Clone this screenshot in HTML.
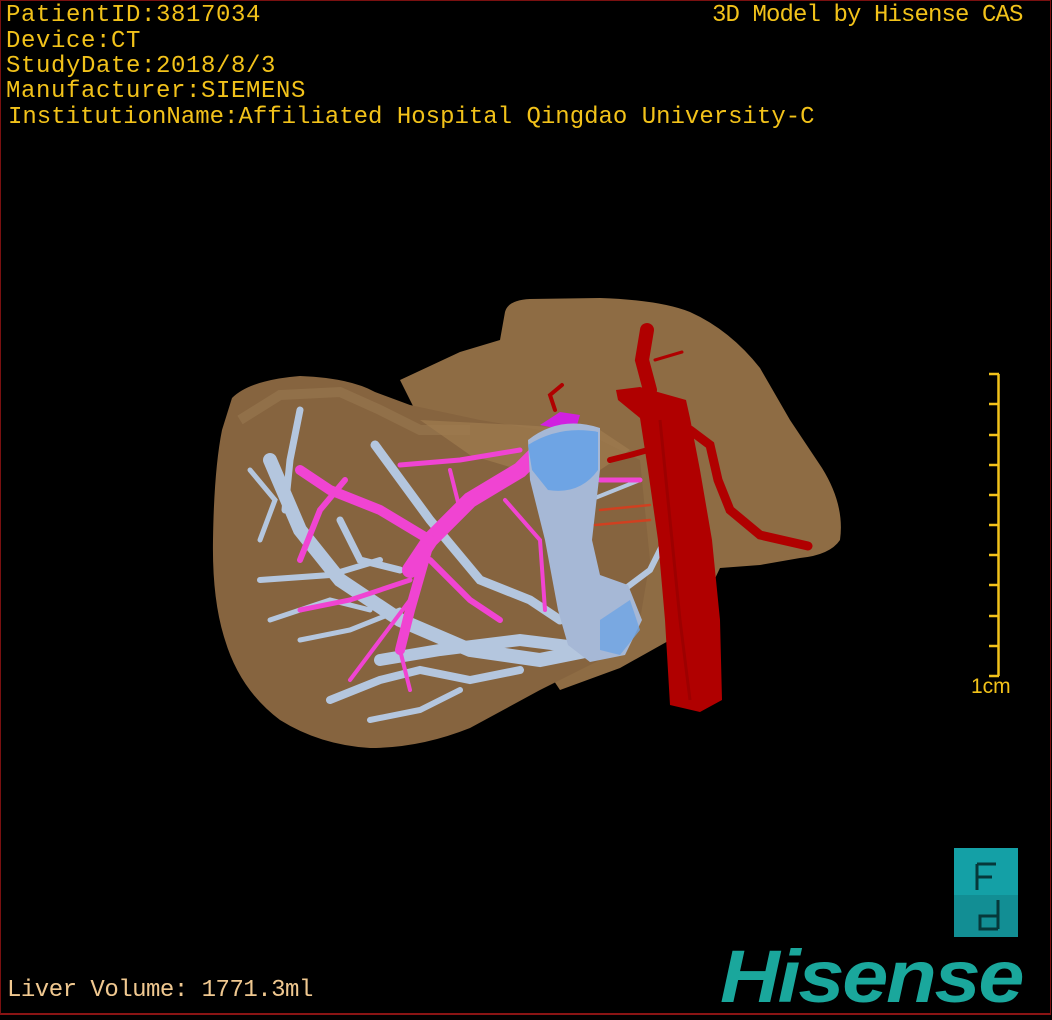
<!DOCTYPE html>
<html><head><meta charset="utf-8">
<style>
html,body{margin:0;padding:0;background:#000;}
#c{position:relative;width:1052px;height:1020px;background:#000;overflow:hidden;font-family:"Liberation Mono","Noto Sans CJK SC",monospace;}
.frame{position:absolute;left:0;top:0;width:1049px;height:1012px;border:1px solid #7a1010;border-bottom:2px solid #8a1414;}
.t{position:absolute;color:#f2c21a;font-size:24px;line-height:25px;white-space:pre;}
</style></head><body>
<div id="c">
<div class="frame"></div>
<div class="t" style="left:6px;top:3px;letter-spacing:0.6px">PatientID:3817034</div>
<div class="t" style="left:6px;top:29px;letter-spacing:0.6px">Device:CT</div>
<div class="t" style="left:6px;top:54px;letter-spacing:0.6px">StudyDate:2018/8/3</div>
<div class="t" style="left:6px;top:79px;letter-spacing:0.6px">Manufacturer:SIEMENS</div>
<div class="t" style="left:8px;top:105px;letter-spacing:0px">InstitutionName:Affiliated Hospital Qingdao University-C</div>
<div class="t" style="left:712px;top:3px;letter-spacing:-0.9px">3D Model by Hisense CAS</div>
<div class="t" style="left:7px;top:978px;letter-spacing:-0.5px;color:#f0c890">Liver Volume: 1771.3ml</div>
<div class="t" style="left:971px;top:674px;font-size:21px;font-family:'Liberation Sans',sans-serif">1cm</div>

<svg width="1052" height="1020" style="position:absolute;left:0;top:0">
<g stroke="#f2c21a" stroke-width="2.5" fill="none">
<path d="M998.5 374V676"/>
<path d="M989 374H999M989 404H999M989 435H999M989 465H999M989 495H999M989 525H999M989 555H999M989 585H999M989 616H999M989 646H999M989 676H999"/>
</g>
<path d="M505 312 Q508 300 530 299 L600 298 Q660 300 690 312 Q730 330 760 368 L790 420 L822 468 Q845 505 840 540 Q830 555 800 558 L760 565 L720 568 L700 610 L670 640 L620 668 L560 690 L500 600 L480 440 L420 420 L400 380 L460 352 L500 340 Z" fill="#8e6c44"/>
<path d="M232 398 Q250 380 300 376 Q350 378 375 392 L410 405 L480 420 L540 430 L600 440 L640 460 L650 560 L640 620 L600 660 L540 690 L470 728 Q420 748 370 748 Q320 745 280 720 Q240 690 225 640 Q212 600 213 540 Q214 470 222 430 Z" fill="#86643f"/>
<path d="M240 420 L280 395 L340 392 L380 410 L420 430 L470 430" stroke="#9a7850" stroke-width="10" fill="none" opacity="0.6"/>
<path d="M420 420 L520 425 L600 430 L630 450 L600 470 L520 470 L470 455 Z" fill="#a07c50" opacity="0.7"/>
<g stroke="#b4c6de" stroke-linecap="round" fill="none">
<path d="M270 460 L300 530 L340 580 L400 620 L470 650 L540 660 L590 650" stroke-width="14"/>
<path d="M380 660 L440 650 L520 640 L600 650" stroke-width="12"/>
<path d="M330 700 L380 680 L420 670 L470 680 L520 670" stroke-width="8"/>
<path d="M370 720 L420 710 L460 690" stroke-width="6"/>
<path d="M300 410 L290 460 L285 510" stroke-width="7"/>
<path d="M375 445 L430 520 L480 580 L530 600 L560 620" stroke-width="9"/>
<path d="M340 520 L360 560 L400 570" stroke-width="7"/>
<path d="M260 580 L330 575 L380 560" stroke-width="6"/>
<path d="M270 620 L330 600 L370 610" stroke-width="5"/>
<path d="M300 640 L350 630 L400 610" stroke-width="5"/>
<path d="M250 470 L275 500 L260 540" stroke-width="5"/>
<path d="M610 600 L650 570 L665 540" stroke-width="6"/>
<path d="M590 500 L640 480" stroke-width="4"/>
</g>
<g stroke="#f044d2" stroke-linecap="round" fill="none">
<path d="M560 430 L520 470 L470 500 L430 540 L410 570" stroke-width="16"/>
<path d="M430 540 L410 610 L400 650" stroke-width="10"/>
<path d="M430 540 L380 510 L330 490 L300 470" stroke-width="10"/>
<path d="M345 480 L320 510 L300 560" stroke-width="6"/>
<path d="M430 560 L470 600 L500 620" stroke-width="6"/>
<path d="M410 580 L350 600 L300 610" stroke-width="5"/>
<path d="M400 465 L460 460 L520 450" stroke-width="5"/>
<path d="M450 470 L460 510" stroke-width="4"/>
<path d="M505 500 L540 540 L545 610" stroke-width="4"/>
<path d="M400 650 L410 690" stroke-width="4"/>
<path d="M600 480 L640 480" stroke-width="5"/>
<path d="M410 600 L380 640 L350 680" stroke-width="4"/>
</g>
<path d="M540 425 L560 412 L580 415 L575 432 Z" fill="#d020e0"/>
<path d="M528 440 Q560 415 600 428 L600 470 L592 540 L600 575 L628 585 L642 620 L625 655 L590 662 L568 645 L558 610 L545 540 L530 480 Z" fill="#a6b8d6"/>
<path d="M528 445 Q560 425 598 432 L598 470 Q580 495 548 490 L532 470 Z" fill="#6ea4e4"/>
<path d="M600 620 L630 600 L640 630 L620 655 L600 650 Z" fill="#6ea4e4" opacity="0.8"/>
<g fill="none" stroke="#b00000" stroke-linecap="round">
<path d="M647 330 L642 360 L650 390" stroke-width="14"/>
<path d="M655 360 L682 352" stroke-width="3"/>
<path d="M690 430 L710 445 L718 480 L730 510 L760 535 L808 546" stroke-width="9"/>
<path d="M648 450 L630 455 L610 460" stroke-width="6"/>
<path d="M555 410 L550 395 L562 385" stroke-width="4"/>
<path d="M600 510 L650 505" stroke="#d04020" stroke-width="2.5"/>
<path d="M595 525 L650 520" stroke="#d04020" stroke-width="2.5"/>
</g>
<path d="M616 390 L640 387 L686 400 L690 418 L700 470 L712 540 L720 620 L722 700 L700 712 L670 705 L665 620 L658 540 L648 470 L640 418 L618 400 Z" fill="#b00000"/>
<path d="M660 420 L670 520 L680 620 L690 700" stroke="#8a0000" stroke-width="3" fill="none" opacity="0.5"/>
<rect x="954" y="848" width="64" height="89" fill="#14a0a6"/>
<rect x="954" y="895" width="64" height="42" fill="#128e94"/>
<path d="M977 864 V890 M977 864 H996 M977 877 H992" stroke="#06383a" stroke-width="3" fill="none"/>
<path d="M998 900 V929 M998 929 H980 V916 H998" stroke="#06383a" stroke-width="3" fill="none"/>
</svg>
<div style="position:absolute;left:720px;top:940px;font-family:'Liberation Sans',sans-serif;font-weight:bold;font-style:italic;font-size:74px;line-height:74px;color:#1aa79c;letter-spacing:-2px;transform:scaleX(1.12);transform-origin:left top">Hisense</div>
</div>
</body></html>
